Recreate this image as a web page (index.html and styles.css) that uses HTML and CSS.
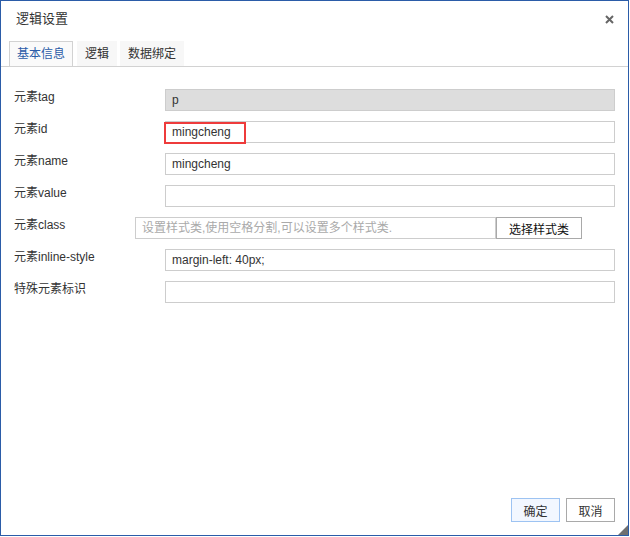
FILE: index.html
```html
<!DOCTYPE html>
<html lang="zh-CN">
  <head>
    <meta charset="UTF-8" />
    <meta name="viewport" content="width=device-width, initial-scale=1.0" />
    <title>逻辑设置</title>
    <link rel="stylesheet" href="styles.css">
  </head>

  <body>
    <div class="dialog">
      <div class="header">
        <span class="title">逻辑设置</span>
        <span class="close">
          <svg width="9" height="9" viewBox="0 0 9 9">
            <path d="M1 1L8 8M8 1L1 8" stroke="#666" stroke-width="2" />
          </svg>
        </span>
      </div>

      <ul class="tabs">
        <li class="tab active">基本信息</li>
        <li class="tab">逻辑</li>
        <li class="tab">数据绑定</li>
      </ul>

      <form class="form">
        <div class="row">
          <label class="label">元素tag</label>
          <input class="field readonly" type="text" value="p" readonly />
        </div>
        <div class="row">
          <label class="label">元素id</label>
          <div class="wrap">
            <input class="field" type="text" value="mingcheng" />
            <span class="mark"></span>
          </div>
        </div>
        <div class="row">
          <label class="label">元素name</label>
          <input class="field" type="text" value="mingcheng" />
        </div>
        <div class="row">
          <label class="label">元素value</label>
          <input class="field" type="text" />
        </div>
        <div class="row row-class">
          <label class="label">元素class</label>
          <input class="field class-field" type="text"
            placeholder="设置样式类,使用空格分割,可以设置多个样式类." />
          <button type="button" class="pick">选择样式类</button>
        </div>
        <div class="row">
          <label class="label">元素inline-style</label>
          <input class="field" type="text" value="margin-left: 40px;" />
        </div>
        <div class="row">
          <label class="label">特殊元素标识</label>
          <input class="field" type="text" />
        </div>
      </form>

      <div class="footer">
        <button type="button" class="btn primary">确定</button>
        <button type="button" class="btn">取消</button>
      </div>

      <span class="resize"></span>
    </div>
  </body>
</html>
```

FILE: styles.css
```css
body {
  margin: 0;
  background-color: #fff;
  font-family: "Liberation Sans", "Noto Sans CJK SC", sans-serif;
  font-size: 12px;
  color: #333;
}

.dialog {
  position: relative;
  box-sizing: border-box;
  width: 629px;
  height: 536px;
  border: 1px solid #2b5ca8;
  display: flex;
  flex-direction: column;
}

.header {
  height: 40px;
  padding: 9px 14px 0 15px;
  box-sizing: border-box;
  display: flex;
  justify-content: space-between;
}

.title {
  font-size: 13px;
  line-height: 18px;
  color: #333;
}

.close {
  width: 9px;
  height: 9px;
  margin-top: 5px;
  cursor: pointer;
}

.close svg {
  display: block;
}

.tabs {
  list-style: none;
  margin: 0;
  padding: 0 0 0 8px;
  display: flex;
  gap: 3px;
  border-bottom: 1px solid #d2d2d2;
}

.tab {
  height: 24px;
  line-height: 24px;
  padding: 0 7px;
  border: 1px solid #f7f7f7;
  border-bottom: none;
  background-color: #f7f7f7;
  color: #333;
  cursor: pointer;
}

.tab.active {
  border-color: #d2d2d2;
  background-color: #fafafa;
  color: #2b5ca8;
  margin-right: 1px;
}

.form {
  padding: 22px 13px 0 13px;
  display: flex;
  flex-direction: column;
  gap: 10px;
}

.row {
  display: flex;
  height: 22px;
}

.label {
  width: 151px;
  flex-shrink: 0;
  line-height: 16px;
  color: #333;
}

.row-class .label {
  width: 121px;
}

.field {
  flex: 1;
  min-width: 0;
  box-sizing: border-box;
  height: 22px;
  margin: 0;
  padding: 0 6px;
  border: 1px solid #cdcdcd;
  font-family: "Liberation Sans", "Noto Sans CJK SC", sans-serif;
  font-size: 12px;
  color: #333;
  outline: none;
}

.field::placeholder {
  color: #aaa;
}

.readonly {
  background-color: #dddddd;
}

.wrap {
  position: relative;
  flex: 1;
  display: flex;
}

.mark {
  position: absolute;
  left: -1px;
  top: 1px;
  width: 82px;
  height: 22px;
  box-sizing: border-box;
  border: 2px solid #ee3b3b;
}

.class-field {
  flex: none;
  width: 361px;
}

.pick {
  box-sizing: border-box;
  width: 86px;
  height: 22px;
  margin: 0;
  border: 1px solid #a9a9a9;
  background-color: #fff;
  font-family: "Liberation Sans", "Noto Sans CJK SC", sans-serif;
  font-size: 12px;
  color: #111;
  cursor: pointer;
}

.footer {
  margin-top: auto;
  padding: 0 13px 13px 0;
  display: flex;
  justify-content: flex-end;
  gap: 6px;
}

.btn {
  box-sizing: border-box;
  width: 49px;
  height: 24px;
  border: 1px solid #a9a9a9;
  background-color: #fff;
  font-family: "Liberation Sans", "Noto Sans CJK SC", sans-serif;
  font-size: 12px;
  color: #333;
  cursor: pointer;
}

.btn.primary {
  border-color: #9dc3f2;
  background-color: #f2f7ff;
}

.resize {
  position: absolute;
  right: 0;
  bottom: 0;
  width: 0;
  height: 0;
  border-style: solid;
  border-width: 0 0 10px 10px;
  border-color: transparent transparent #707070 transparent;
}
```
